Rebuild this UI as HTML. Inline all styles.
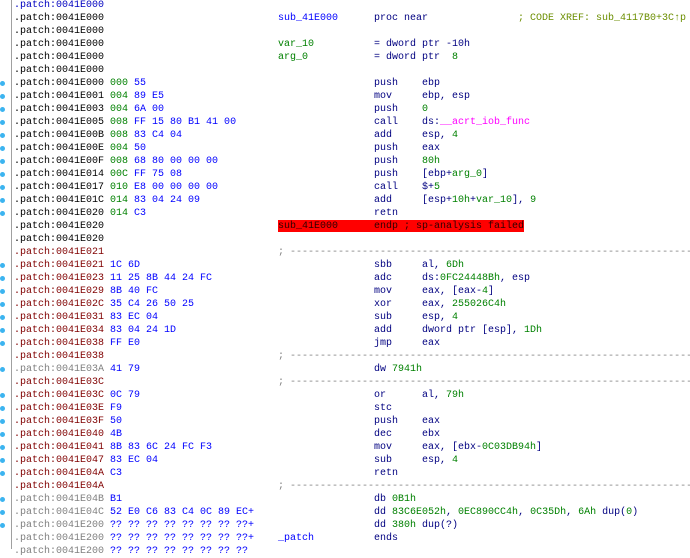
<!DOCTYPE html>
<html><head><meta charset="utf-8"><style>
body{margin:0;width:690px;height:549px;background:#fff;overflow:hidden;position:relative;font-family:"Liberation Mono",monospace;font-size:10px;}
.r{position:absolute;left:0;width:690px;height:13px;line-height:13px;white-space:pre;}
.r span{position:absolute;top:0;}
i{font-style:normal}
.p{left:14px;color:#000}
.pr{left:14px;color:#800000}
.pg{left:14px;color:#808080}
.b{left:110px;color:#0000ff}
.l{left:278px;color:#0000ff}
.m{left:374px;color:#000080}
.o{left:422px;color:#000080}
.c{left:518px;color:#6b8e00}
.n{color:#008000}
.k{color:#ff00ff}
.d{color:#808080}
.g{left:0;width:5px;height:5px;border-radius:50%;background:#3cb4f0;top:4px!important}
#vl{position:absolute;left:11px;top:0;width:1px;height:549px;background:#a0a0a0}
#bar{position:absolute;left:278px;top:220px;width:246px;height:12px;background:#ff0000}
</style></head><body>
<div id="vl"></div>
<div id="bar"></div>
<div class="r" style="top:-1px"><span class="p" style="color:#0000c0">.patch:0041E000</span></div>
<div class="r" style="top:12px"><span class="p">.patch:0041E000</span><span class="l">sub_41E000</span><span class="m">proc near</span><span class="c">; CODE XREF: sub_4117B0+3C↑p</span></div>
<div class="r" style="top:25px"><span class="p">.patch:0041E000</span></div>
<div class="r" style="top:38px"><span class="p">.patch:0041E000</span><span class="l n">var_10</span><span class="m">= dword ptr -10h</span></div>
<div class="r" style="top:51px"><span class="p">.patch:0041E000</span><span class="l n">arg_0</span><span class="m">= dword ptr  <i class="n">8</i></span></div>
<div class="r" style="top:64px"><span class="p">.patch:0041E000</span></div>
<div class="r" style="top:77px"><span class="g"></span><span class="p">.patch:0041E000 <i class="n">000</i> <i style="color:#00f">55</i></span><span class="m">push</span><span class="o">ebp</span></div>
<div class="r" style="top:90px"><span class="g"></span><span class="p">.patch:0041E001 <i class="n">004</i> <i style="color:#00f">89 E5</i></span><span class="m">mov</span><span class="o">ebp, esp</span></div>
<div class="r" style="top:103px"><span class="g"></span><span class="p">.patch:0041E003 <i class="n">004</i> <i style="color:#00f">6A 00</i></span><span class="m">push</span><span class="o n">0</span></div>
<div class="r" style="top:116px"><span class="g"></span><span class="p">.patch:0041E005 <i class="n">008</i> <i style="color:#00f">FF 15 80 B1 41 00</i></span><span class="m">call</span><span class="o">ds:<i class="k">__acrt_iob_func</i></span></div>
<div class="r" style="top:129px"><span class="g"></span><span class="p">.patch:0041E00B <i class="n">008</i> <i style="color:#00f">83 C4 04</i></span><span class="m">add</span><span class="o">esp, <i class="n">4</i></span></div>
<div class="r" style="top:142px"><span class="g"></span><span class="p">.patch:0041E00E <i class="n">004</i> <i style="color:#00f">50</i></span><span class="m">push</span><span class="o">eax</span></div>
<div class="r" style="top:155px"><span class="g"></span><span class="p">.patch:0041E00F <i class="n">008</i> <i style="color:#00f">68 80 00 00 00</i></span><span class="m">push</span><span class="o n">80h</span></div>
<div class="r" style="top:168px"><span class="g"></span><span class="p">.patch:0041E014 <i class="n">00C</i> <i style="color:#00f">FF 75 08</i></span><span class="m">push</span><span class="o">[ebp+<i class="n">arg_0</i>]</span></div>
<div class="r" style="top:181px"><span class="g"></span><span class="p">.patch:0041E017 <i class="n">010</i> <i style="color:#00f">E8 00 00 00 00</i></span><span class="m">call</span><span class="o">$+<i class="n">5</i></span></div>
<div class="r" style="top:194px"><span class="g"></span><span class="p">.patch:0041E01C <i class="n">014</i> <i style="color:#00f">83 04 24 09</i></span><span class="m">add</span><span class="o">[esp+<i class="n">10h</i>+<i class="n">var_10</i>], <i class="n">9</i></span></div>
<div class="r" style="top:207px"><span class="g"></span><span class="p">.patch:0041E020 <i class="n">014</i> <i style="color:#00f">C3</i></span><span class="m">retn</span></div>
<div class="r" style="top:220px"><span class="p">.patch:0041E020</span><span class="l" style="color:#300000">sub_41E000</span><span class="m" style="color:#300000">endp ; sp-analysis failed</span></div>
<div class="r" style="top:233px"><span class="p">.patch:0041E020</span></div>
<div class="r" style="top:246px"><span class="pr">.patch:0041E021</span><span class="l d">; ---------------------------------------------------------------------</span></div>
<div class="r" style="top:259px"><span class="g"></span><span class="pr">.patch:0041E021</span><span class="b">1C 6D</span><span class="m">sbb</span><span class="o">al, <i class="n">6Dh</i></span></div>
<div class="r" style="top:272px"><span class="g"></span><span class="pr">.patch:0041E023</span><span class="b">11 25 8B 44 24 FC</span><span class="m">adc</span><span class="o">ds:<i class="n">0FC24448Bh</i>, esp</span></div>
<div class="r" style="top:285px"><span class="g"></span><span class="pr">.patch:0041E029</span><span class="b">8B 40 FC</span><span class="m">mov</span><span class="o">eax, [eax-<i class="n">4</i>]</span></div>
<div class="r" style="top:298px"><span class="g"></span><span class="pr">.patch:0041E02C</span><span class="b">35 C4 26 50 25</span><span class="m">xor</span><span class="o">eax, <i class="n">255026C4h</i></span></div>
<div class="r" style="top:311px"><span class="g"></span><span class="pr">.patch:0041E031</span><span class="b">83 EC 04</span><span class="m">sub</span><span class="o">esp, <i class="n">4</i></span></div>
<div class="r" style="top:324px"><span class="g"></span><span class="pr">.patch:0041E034</span><span class="b">83 04 24 1D</span><span class="m">add</span><span class="o">dword ptr [esp], <i class="n">1Dh</i></span></div>
<div class="r" style="top:337px"><span class="g"></span><span class="pr">.patch:0041E038</span><span class="b">FF E0</span><span class="m">jmp</span><span class="o">eax</span></div>
<div class="r" style="top:350px"><span class="pr">.patch:0041E038</span><span class="l d">; ---------------------------------------------------------------------</span></div>
<div class="r" style="top:363px"><span class="g"></span><span class="pg">.patch:0041E03A</span><span class="b">41 79</span><span class="m">dw <i class="n">7941h</i></span></div>
<div class="r" style="top:376px"><span class="pr">.patch:0041E03C</span><span class="l d">; ---------------------------------------------------------------------</span></div>
<div class="r" style="top:389px"><span class="g"></span><span class="pr">.patch:0041E03C</span><span class="b">0C 79</span><span class="m">or</span><span class="o">al, <i class="n">79h</i></span></div>
<div class="r" style="top:402px"><span class="g"></span><span class="pr">.patch:0041E03E</span><span class="b">F9</span><span class="m">stc</span></div>
<div class="r" style="top:415px"><span class="g"></span><span class="pr">.patch:0041E03F</span><span class="b">50</span><span class="m">push</span><span class="o">eax</span></div>
<div class="r" style="top:428px"><span class="g"></span><span class="pr">.patch:0041E040</span><span class="b">4B</span><span class="m">dec</span><span class="o">ebx</span></div>
<div class="r" style="top:441px"><span class="g"></span><span class="pr">.patch:0041E041</span><span class="b">8B 83 6C 24 FC F3</span><span class="m">mov</span><span class="o">eax, [ebx-<i class="n">0C03DB94h</i>]</span></div>
<div class="r" style="top:454px"><span class="g"></span><span class="pr">.patch:0041E047</span><span class="b">83 EC 04</span><span class="m">sub</span><span class="o">esp, <i class="n">4</i></span></div>
<div class="r" style="top:467px"><span class="g"></span><span class="pr">.patch:0041E04A</span><span class="b">C3</span><span class="m">retn</span></div>
<div class="r" style="top:480px"><span class="pr">.patch:0041E04A</span><span class="l d">; ---------------------------------------------------------------------</span></div>
<div class="r" style="top:493px"><span class="g"></span><span class="pg">.patch:0041E04B</span><span class="b">B1</span><span class="m">db <i class="n">0B1h</i></span></div>
<div class="r" style="top:506px"><span class="g"></span><span class="pg">.patch:0041E04C</span><span class="b">52 E0 C6 83 C4 0C 89 EC+</span><span class="m">dd <i class="n">83C6E052h</i>, <i class="n">0EC890CC4h</i>, <i class="n">0C35Dh</i>, <i class="n">6Ah</i> dup(<i class="n">0</i>)</span></div>
<div class="r" style="top:519px"><span class="g"></span><span class="pg">.patch:0041E200</span><span class="b">?? ?? ?? ?? ?? ?? ?? ??+</span><span class="m">dd <i class="n">380h</i> dup(?)</span></div>
<div class="r" style="top:532px"><span class="pg">.patch:0041E200</span><span class="b">?? ?? ?? ?? ?? ?? ?? ??+</span><span class="l">_patch</span><span class="m">ends</span></div>
<div class="r" style="top:545px"><span class="pg">.patch:0041E200</span><span class="b">?? ?? ?? ?? ?? ?? ?? ??</span></div>
</body></html>
